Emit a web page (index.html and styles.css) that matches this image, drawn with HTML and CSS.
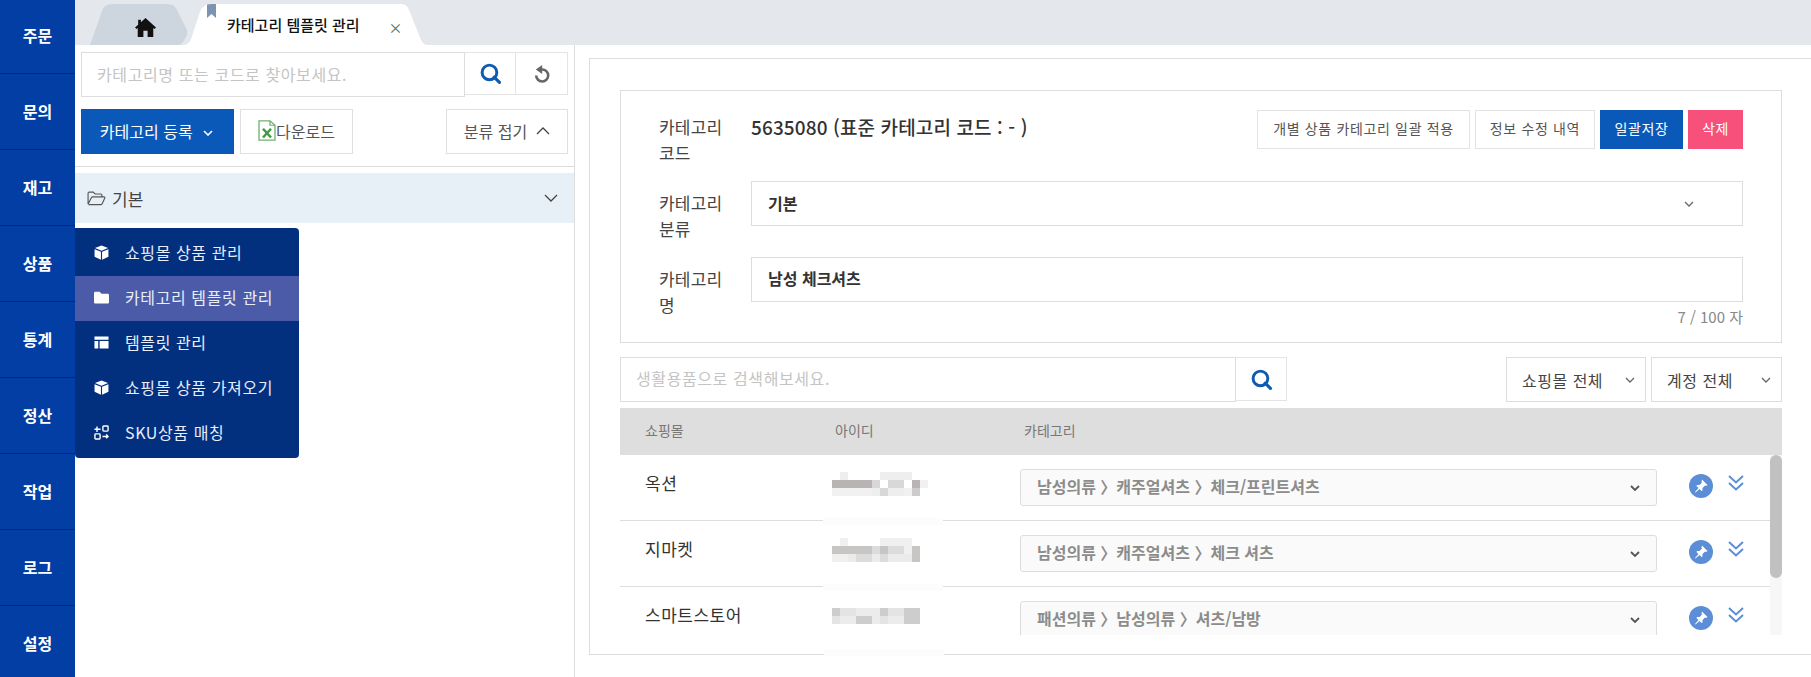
FILE: index.html
```html
<!DOCTYPE html>
<html lang="ko">
<head>
    <meta charset="UTF-8">
    <meta name="viewport" content="width=device-width, initial-scale=1.0">
    <title>카테고리 템플릿 관리</title>
    <link rel="stylesheet" href="styles.css">
</head>
<body>
<div class="app">
    <nav class="sidebar">
        <a class="navItem">주문</a>
        <a class="navItem">문의</a>
        <a class="navItem">재고</a>
        <div class="navItem">
            상품
            <ul class="flyout">
                <li class="flyoutItem">
                    <svg class="flyoutIcon" viewBox="0 0 16 16"><path fill="#fff" d="M8 .5 15 3.2 8 6 1 3.2zM.6 4.4 7.4 7.2V15.6L.6 12.6zM15.4 4.4V12.6L8.6 15.6V7.2z"/></svg>
                    쇼핑몰 상품 관리
                </li>
                <li class="flyoutItem active">
                    <svg class="flyoutIcon" viewBox="0 0 16 16"><path fill="#fff" d="M0 3.2C0 2.4.6 1.8 1.4 1.8H6L8 4H14.6C15.4 4 16 4.6 16 5.4V13C16 13.8 15.4 14.4 14.6 14.4H1.4C.6 14.4 0 13.8 0 13z"/></svg>
                    카테고리 템플릿 관리
                </li>
                <li class="flyoutItem">
                    <svg class="flyoutIcon" viewBox="0 0 16 16"><path fill="#fff" d="M.5 1.5H15.5V5H.5zM.5 6.500H4.500V14.500H.5zM6 6.500H15.500V14.500H6z"/></svg>
                    템플릿 관리
                </li>
                <li class="flyoutItem">
                    <svg class="flyoutIcon" viewBox="0 0 16 16"><path fill="#fff" d="M8 .5 15 3.2 8 6 1 3.2zM.6 4.4 7.4 7.2V15.6L.6 12.6zM15.4 4.4V12.6L8.6 15.6V7.2z"/></svg>
                    쇼핑몰 상품 가져오기
                </li>
                <li class="flyoutItem">
                    <svg class="flyoutIcon" viewBox="0 0 16 16"><g fill="none" stroke="#fff" stroke-width="1.500"><rect x="9.500" y="1" width="5.500" height="5.500" rx=".8"/><rect x="1" y="9.500" width="5.500" height="5.500" rx=".8"/><path d="M.5 4.500H7M3.200 1.500V7.500M9 12.200H15M13 10.200 15 12.200 13 14.200"/></g></svg>
                    SKU상품 매칭
                </li>
            </ul>
        </div>
        <a class="navItem">통계</a>
        <a class="navItem">정산</a>
        <a class="navItem">작업</a>
        <a class="navItem">로그</a>
        <a class="navItem">설정</a>
    </nav>

    <div class="main">
        <div class="tabBar">
            <div class="tab tabHome">
                <svg class="homeIcon" viewBox="0 0 20 18"><path fill="#111" d="M10 0 20 9 18.600 10.400 17.400 9.400V18H12V12H8V18H2.600V9.400L1.400 10.400 0 9 3 6.300V1.500H5.600V4z"/></svg>
            </div>
            <div class="tab tabActive">
                <span class="bookmark"></span>
                <span class="tabTitle">카테고리 템플릿 관리</span>
                <span class="tabClose">×</span>
            </div>
        </div>

        <div class="content">
            <aside class="leftPane">
                <div class="toolbar">
                    <div class="searchRow">
                        <div class="searchInput">카테고리명 또는 코드로 찾아보세요.</div>
                        <div class="iconBtn">
                            <svg class="searchIcon" viewBox="0 0 20 20"><circle cx="9" cy="9" r="7" fill="none" stroke="#0f5bb0" stroke-width="2.800"/><path d="M13.500 13.500 18.500 18.500" stroke="#0f5bb0" stroke-width="3" stroke-linecap="round"/></svg>
                        </div>
                        <div class="iconBtn refreshBtn">
                            <svg class="refreshIcon" viewBox="0 0 16 18"><path d="M2.200 10.500A6 6 0 1 0 8 4.500H6" fill="none" stroke="#666" stroke-width="2.600"/><path fill="#666" d="M8.200 0V9L1.800 4.500z"/></svg>
                        </div>
                    </div>
                    <div class="actionRow">
                        <button class="btnPrimary">카테고리 등록
                            <svg class="chevSmall" viewBox="0 0 10 6"><path d="M1 1 5 5 9 1" fill="none" stroke="#fff" stroke-width="1.600"/></svg>
                        </button>
                        <button class="btnLine btnExcel">
                            <svg class="excelIcon" viewBox="0 0 18 24" preserveAspectRatio="none"><path d="M1 1H12L17 6V23H1z" fill="#fff" stroke="#6cb26f" stroke-width="1.300"/><path d="M12 1V6H17" fill="none" stroke="#6cb26f" stroke-width="1.300"/><path d="M5 10 13 20M13 10 5 20" stroke="#3f9a46" stroke-width="2.400"/></svg>다운로드
                        </button>
                        <button class="btnLine btnFold">분류 접기
                            <svg class="chevFold" viewBox="0 0 14 8"><path d="M1 7 7 1 13 7" fill="none" stroke="#444" stroke-width="1.300"/></svg>
                        </button>
                    </div>
                </div>
                <div class="treeRow">
                    <svg class="folderIcon" viewBox="0 0 20 16"><path d="M1 14V2.500C1 1.700 1.600 1.200 2.300 1.200H6.500L8.500 3.200H14.500C15.300 3.200 15.800 3.800 15.800 4.500V6.200M1 14 4.500 7.200C4.800 6.500 5.300 6.200 6 6.200H18C18.800 6.200 19.200 6.900 18.900 7.500L16 13.500C15.700 14.100 15.200 14.500 14.500 14.500H1.500" fill="none" stroke="#555" stroke-width="1.200"/></svg>
                    <span class="treeName">기본</span>
                    <svg class="chevTree" viewBox="0 0 14 8"><path d="M1 1 7 7 13 1" fill="none" stroke="#444" stroke-width="1.300"/></svg>
                </div>
            </aside>

            <section class="rightPane">
                <div class="panelBox">
                    <div class="formCard">
                        <div class="formRow">
                            <label class="formLabel">카테고리 코드</label>
                            <div class="codeLine">
                                <span class="codeValue">5635080 (표준 카테고리 코드 : - )</span>
                                <div class="codeBtns">
                                    <button class="btnSmall btnWide">개별 상품 카테고리 일괄 적용</button>
                                    <button class="btnSmall btnLog">정보 수정 내역</button>
                                    <button class="btnSmall btnSave">일괄저장</button>
                                    <button class="btnSmall btnDelete">삭제</button>
                                </div>
                            </div>
                        </div>
                        <div class="formRow">
                            <label class="formLabel">카테고리 분류</label>
                            <div class="fieldBox fieldSelect">
                                <span>기본</span>
                                <svg class="chevField" viewBox="0 0 10 6"><path d="M1 1 5 5 9 1" fill="none" stroke="#666" stroke-width="1.300"/></svg>
                            </div>
                        </div>
                        <div class="formRow">
                            <label class="formLabel">카테고리 명</label>
                            <div class="fieldWrap">
                                <div class="fieldBox">남성 체크셔츠</div>
                                <div class="counter">7 / 100 자</div>
                            </div>
                        </div>
                    </div>

                    <div class="filterRow">
                        <div class="filterInput">생활용품으로 검색해보세요.</div>
                        <div class="filterBtn">
                            <svg class="searchIcon" viewBox="0 0 20 20"><circle cx="9" cy="9" r="7" fill="none" stroke="#0f5bb0" stroke-width="2.800"/><path d="M13.500 13.500 18.500 18.500" stroke="#0f5bb0" stroke-width="3" stroke-linecap="round"/></svg>
                        </div>
                        <div class="filterSelect selectMall">쇼핑몰 전체
                            <svg class="chevField" viewBox="0 0 10 6"><path d="M1 1 5 5 9 1" fill="none" stroke="#666" stroke-width="1.300"/></svg>
                        </div>
                        <div class="filterSelect selectAccount">계정 전체
                            <svg class="chevField" viewBox="0 0 10 6"><path d="M1 1 5 5 9 1" fill="none" stroke="#666" stroke-width="1.300"/></svg>
                        </div>
                    </div>

                    <div class="tableHead">
                        <span class="colMall">쇼핑몰</span>
                        <span class="colId">아이디</span>
                        <span>카테고리</span>
                    </div>

                    <div class="tableBody">
                        <div class="rows">
                            <div class="tableRow">
                                <div class="mallName">옥션</div>
                                <div class="mosaic">
                                    <svg width="96" height="24"><path fill="#eee" d="M8 0h8v8H8zM48 0h32v8H48zM40 16h32v8H40z"/><path fill="#b8b4b4" d="M0 8h40v8H0zM80 8h8v8h-8z"/><path fill="#d8d8d8" d="M40 8h8v8h-8zM56 8h16v8H56zM48 16h8v8h-8z"/><path fill="#f1f1f1" d="M0 16h40v8H0zM72 16h8v8h-8zM88 8h8v8h-8z"/><path fill="#ccc" d="M80 16h8v8h-8z"/></svg>
                                </div>
                                <div class="catSelect"><span>남성의류 〉캐주얼셔츠 〉체크/프린트셔츠</span>
                                    <svg class="chevCat" viewBox="0 0 10 6"><path d="M1 1 5 5 9 1" fill="none" stroke="#555" stroke-width="1.800"/></svg>
                                </div>
                                <div class="pinBtn">
                                    <svg viewBox="0 0 24 24" class="pinIcon"><circle cx="12" cy="12" r="12" fill="#5b8ed6"/><path fill="#fff" d="M13 5.500 18.500 11 17 12 16 11.500 13.500 14 13.500 16.500 12.500 17 10.500 15 6.500 18.500 6 18 9.500 14 7.500 12 8 11 10.500 11 13 8.500 12.500 7.500z"/></svg>
                                </div>
                                <svg class="chevDouble" viewBox="0 0 16 16"><path d="M1 1 8 7.500 15 1M1 8 8 14.500 15 8" fill="none" stroke="#5b8ed6" stroke-width="2"/></svg>
                            </div>
                            <div class="tableRow">
                                <div class="mallName">지마켓</div>
                                <div class="mosaic">
                                    <svg width="96" height="24"><path fill="#f0f0f0" d="M8 0h8v8H8zM48 0h32v8H48zM0 16h16v8H0zM72 8h8v8h-8z"/><path fill="#c8c5c5" d="M0 8h40v8H0zM48 8h8v8h-8zM80 8h8v8h-8zM80 16h8v8h-8z"/><path fill="#dcdcdc" d="M24 16h16v8H24zM40 8h8v8h-8zM56 8h16v8H56zM48 16h8v8h-8z"/><path fill="#ebebeb" d="M16 16h8v8h-8zM40 16h8v8h-8zM56 16h24v8H56z"/></svg>
                                </div>
                                <div class="catSelect"><span>남성의류 〉캐주얼셔츠 〉체크 셔츠</span>
                                    <svg class="chevCat" viewBox="0 0 10 6"><path d="M1 1 5 5 9 1" fill="none" stroke="#555" stroke-width="1.800"/></svg>
                                </div>
                                <div class="pinBtn">
                                    <svg viewBox="0 0 24 24" class="pinIcon"><circle cx="12" cy="12" r="12" fill="#5b8ed6"/><path fill="#fff" d="M13 5.500 18.500 11 17 12 16 11.500 13.500 14 13.500 16.500 12.500 17 10.500 15 6.500 18.500 6 18 9.500 14 7.500 12 8 11 10.500 11 13 8.500 12.500 7.500z"/></svg>
                                </div>
                                <svg class="chevDouble" viewBox="0 0 16 16"><path d="M1 1 8 7.500 15 1M1 8 8 14.500 15 8" fill="none" stroke="#5b8ed6" stroke-width="2"/></svg>
                            </div>
                            <div class="tableRow">
                                <div class="mallName">스마트스토어</div>
                                <div class="mosaic mosaicLow">
                                    <svg width="96" height="16"><path fill="#e4e4e4" d="M8 0h16v8H8zM0 8h8v8H0zM48 8h8v8h-8zM56 0h16v8H56z"/><path fill="#cdcdcd" d="M0 0h8v8H0zM24 8h16v8H24zM48 0h8v8h-8zM72 0h8v16h-8zM80 0h8v16h-8z"/><path fill="#ececec" d="M8 8h16v8H8zM24 0h16v8H24zM40 0h8v16h-8zM56 8h16v8H56z"/></svg>
                                </div>
                                <div class="catSelect"><span>패션의류 〉남성의류 〉셔츠/남방</span>
                                    <svg class="chevCat" viewBox="0 0 10 6"><path d="M1 1 5 5 9 1" fill="none" stroke="#555" stroke-width="1.800"/></svg>
                                </div>
                                <div class="pinBtn">
                                    <svg viewBox="0 0 24 24" class="pinIcon"><circle cx="12" cy="12" r="12" fill="#5b8ed6"/><path fill="#fff" d="M13 5.500 18.500 11 17 12 16 11.500 13.500 14 13.500 16.500 12.500 17 10.500 15 6.500 18.500 6 18 9.500 14 7.500 12 8 11 10.500 11 13 8.500 12.500 7.500z"/></svg>
                                </div>
                                <svg class="chevDouble" viewBox="0 0 16 16"><path d="M1 1 8 7.500 15 1M1 8 8 14.500 15 8" fill="none" stroke="#5b8ed6" stroke-width="2"/></svg>
                            </div>
                        </div>
                        <div class="scrollTrack"><div class="scrollThumb"></div></div>
                    </div>
                </div>
            </section>
        </div>
    </div>
</div>
</body>
</html>
```

FILE: styles.css
```css
* {
    box-sizing: border-box;
}
body {
    margin: 0;
    height: 677px;
    overflow: hidden;
    background: #fff;
    color: #333;
    font-family: "Noto Sans CJK KR", "Noto Sans", sans-serif;
}
button {
    font-family: inherit;
    cursor: pointer;
}
.app {
    display: flex;
    height: 677px;
}

/* sidebar */
.sidebar {
    width: 75px;
    flex: none;
    background: #023ea4;
    position: relative;
    z-index: 2;
}
.navItem {
    display: flex;
    align-items: center;
    justify-content: center;
    height: 76px;
    padding-bottom: 2px;
    border-bottom: 1px solid #04296e;
    color: #fff;
    font-size: 16px;
    font-weight: 700;
    position: relative;
}
.navItem:first-child {
    height: 74px;
    padding-bottom: 4px;
}
.navItem:last-child {
    border-bottom: none;
}
.flyout {
    position: absolute;
    left: 100%;
    top: 2px;
    width: 224px;
    margin: 0;
    padding: 3px 0 2px;
    list-style: none;
    background: #02307f;
    border-radius: 0 4px 4px 4px;
}
.flyoutItem {
    display: flex;
    align-items: center;
    height: 45px;
    padding: 0 0 3px 19px;
    font-size: 16px;
    font-weight: 400;
    letter-spacing: .6px;
    color: #e8eefa;
    white-space: nowrap;
}
.flyoutItem.active {
    background: #4c5ba7;
}
.flyoutIcon {
    width: 15px;
    height: 15px;
    margin-right: 16px;
    flex: none;
}

/* tabs */
.main {
    flex: 1;
    min-width: 0;
    display: flex;
    flex-direction: column;
}
.tabBar {
    display: flex;
    align-items: flex-end;
    height: 45px;
    flex: none;
    padding-left: 15px;
    background: #e4e8ed;
}
.tab {
    height: 41px;
    display: flex;
    align-items: center;
}
.tabHome {
    width: 98px;
    justify-content: center;
    padding-left: 12px;
    background: #cdd6de;
    clip-path: path("M0 41 L12 7 Q14 0 22 0 H78 Q84 0 87 6 L97 26 Q98 30 96 33 L93 38 Q91 41 87 41 Z");
}
.homeIcon {
    width: 21px;
    height: 19px;
    margin: 6px 0 0 0;
}
.tabActive {
    width: 245px;
    margin-left: -5px;
    padding-left: 24px;
    background: #fff;
    clip-path: path("M0 41 Q6 41 8 35 L17 8 Q20 0 28 0 H218 Q224 0 226 6 L238 36 Q240 41 245 41 Z");
}
.bookmark {
    width: 9px;
    height: 14px;
    margin: -27px 11px 0 0;
    background: #7c94b0;
    clip-path: polygon(0 0, 100% 0, 100% 100%, 50% 72%, 0 100%);
}
.tabTitle {
    font-size: 15px;
    font-weight: 500;
    color: #111;
    white-space: nowrap;
}
.tabClose {
    margin: 4px 0 0 29px;
    font-size: 14px;
    color: #666;
}

.content {
    flex: 1;
    display: flex;
    min-height: 0;
}

/* left */
.leftPane {
    width: 500px;
    flex: none;
    border-right: 1px solid #ddd;
}
.toolbar {
    padding: 7px 0 12px 6px;
    border-bottom: 1px solid #ddd;
}
.searchRow {
    display: flex;
    width: 487px;
    align-items: flex-start;
}
.searchInput {
    width: 384px;
    height: 45px;
    border: 1px solid #ddd;
    padding-left: 15px;
    line-height: 43px;
    font-size: 16px;
    letter-spacing: .6px;
    color: #c4c4c4;
    white-space: nowrap;
}
.iconBtn {
    width: 51px;
    height: 43px;
    border: 1px solid #e4e4e4;
    border-left: none;
    display: flex;
    align-items: center;
    justify-content: center;
}
.refreshBtn {
    width: 52px;
}
.searchIcon {
    width: 21px;
    height: 21px;
}
.refreshIcon {
    width: 16px;
    height: 18px;
}
.actionRow {
    display: flex;
    width: 487px;
    margin-top: 12px;
    gap: 6px;
}
.btnPrimary {
    width: 153px;
    height: 45px;
    padding: 0 2px 2px 0;
    border: none;
    background: #0a59b8;
    color: #fff;
    font-size: 16px;
}
.chevSmall {
    width: 10px;
    height: 6px;
    margin: 0 0 2px 6px;
}
.btnLine {
    height: 45px;
    border: 1px solid #e0e0e0;
    background: #fff;
    color: #555;
    font-size: 16px;
    display: flex;
    align-items: center;
    justify-content: center;
    padding: 0 0 2px;
}
.btnExcel {
    width: 113px;
}
.excelIcon {
    width: 18px;
    height: 21px;
}
.btnFold {
    width: 122px;
    margin-left: auto;
}
.chevFold {
    width: 14px;
    height: 8px;
    margin-left: 9px;
}
.treeRow {
    display: flex;
    align-items: center;
    height: 50px;
    margin-top: 6px;
    padding: 0 16px 0 12px;
    background: #e8f0f7;
}
.folderIcon {
    width: 19px;
    height: 15px;
    margin-right: 6px;
}
.treeName {
    font-size: 17px;
    color: #444;
}
.chevTree {
    width: 14px;
    height: 8px;
    margin-left: auto;
}

/* right */
.rightPane {
    flex: 1;
    min-width: 0;
    padding: 13px 0 22px 14px;
}
.panelBox {
    position: relative;
    height: 597px;
    padding: 31px 29px 0 30px;
    border: 1px solid #ddd;
    border-right: none;
}
.panelBox::after {
    content: "";
    position: absolute;
    left: 234px;
    bottom: -2px;
    width: 120px;
    height: 7px;
    background: #fcfcfc;
}
.formCard {
    border: 1px solid #ddd;
    padding: 14px 38px 9px;
}
.formRow {
    display: flex;
    height: 76px;
}
.formLabel {
    width: 92px;
    flex: none;
    padding: 9px 22px 0 0;
    font-size: 17px;
    line-height: 26px;
    letter-spacing: .2px;
    color: #444;
}
.codeLine {
    flex: 1;
    display: flex;
    justify-content: space-between;
}
.codeValue {
    padding-top: 9px;
    font-size: 19px;
    line-height: 26px;
    letter-spacing: .12px;
    font-weight: 500;
    color: #333;
}
.codeBtns {
    display: flex;
    gap: 5px;
    margin-top: 5px;
}
.btnSmall {
    height: 39px;
    padding: 0 0 3px;
    border: 1px solid #e3e3e3;
    background: #fff;
    color: #555;
    font-size: 14px;
    letter-spacing: .65px;
    white-space: nowrap;
}
.btnWide {
    width: 213px;
}
.btnLog {
    width: 120px;
}
.btnSave {
    width: 83px;
    border: none;
    background: #0a59b8;
    color: #fff;
}
.btnDelete {
    width: 55px;
    border: none;
    background: #f7507a;
    color: #fff;
}
.fieldWrap {
    flex: 1;
}
.fieldBox {
    flex: 1;
    height: 45px;
    padding: 0 16px;
    border: 1px solid #ddd;
    font-size: 16px;
    font-weight: 700;
    line-height: 41px;
    color: #333;
}
.fieldSelect {
    display: flex;
    align-items: center;
    justify-content: space-between;
    padding-right: 48px;
}
.chevField {
    width: 10px;
    height: 6px;
}
.counter {
    margin-top: 6px;
    font-size: 15px;
    line-height: 18px;
    text-align: right;
    color: #888;
}
.filterRow {
    display: flex;
    height: 45px;
    margin-top: 14px;
}
.filterInput {
    width: 616px;
    border: 1px solid #ddd;
    padding-left: 15px;
    line-height: 41px;
    font-size: 16px;
    letter-spacing: .6px;
    color: #c4c4c4;
}
.filterBtn {
    width: 51px;
    height: 44px;
    border: 1px solid #e4e4e4;
    border-left: none;
    display: flex;
    align-items: center;
    justify-content: center;
}
.filterSelect {
    display: flex;
    align-items: center;
    justify-content: space-between;
    height: 45px;
    border: 1px solid #ddd;
    padding: 0 10px 0 15px;
    font-size: 16px;
    letter-spacing: .5px;
    color: #444;
}
.selectMall {
    width: 140px;
    margin-left: 219px;
}
.selectAccount {
    width: 131px;
    margin-left: 5px;
}
.tableHead {
    display: flex;
    align-items: center;
    height: 47px;
    margin-top: 6px;
    padding: 0 0 3px 25px;
    background: #dedede;
    font-size: 14px;
    color: #777;
}
.colMall {
    width: 190px;
}
.colId {
    width: 189px;
}
.tableBody {
    display: flex;
    height: 180px;
    overflow: hidden;
}
.rows {
    flex: 1;
    min-width: 0;
}
.tableRow {
    display: flex;
    align-items: flex-start;
    height: 66px;
    padding: 14px 0 0 25px;
    border-bottom: 1px solid #ddd;
}
.mallName {
    width: 187px;
    flex: none;
    font-size: 17px;
    line-height: 27px;
    letter-spacing: .5px;
    color: #333;
}
.mosaic {
    position: relative;
    width: 188px;
    flex: none;
    height: 24px;
    margin-top: 3px;
}
.mosaic svg {
    display: block;
    filter: blur(.5px);
}
.mosaicLow {
    margin-top: 7px;
}
.mosaic::after {
    content: "";
    position: absolute;
    left: -9px;
    top: 46px;
    width: 120px;
    height: 7px;
    background: #fcfcfc;
}
.catSelect {
    display: flex;
    align-items: center;
    justify-content: space-between;
    width: 637px;
    height: 37px;
    flex: none;
    padding: 0 16px 3px;
    border: 1px solid #ddd;
    border-radius: 3px;
    background: #fafafa;
    font-size: 16px;
    font-weight: 700;
    color: #8c8c8c;
}
.chevCat {
    width: 10px;
    height: 6px;
    margin-top: 3px;
}
.pinBtn {
    flex: none;
    margin: 5px 0 0 32px;
}
.pinIcon {
    display: block;
    width: 24px;
    height: 24px;
}
.chevDouble {
    width: 16px;
    height: 16px;
    flex: none;
    margin: 6px 0 0 15px;
}
.scrollTrack {
    width: 12px;
    flex: none;
    background: #f7f7f7;
}
.scrollThumb {
    height: 123px;
    border-radius: 6px;
    background: #c1c1c1;
}
```
